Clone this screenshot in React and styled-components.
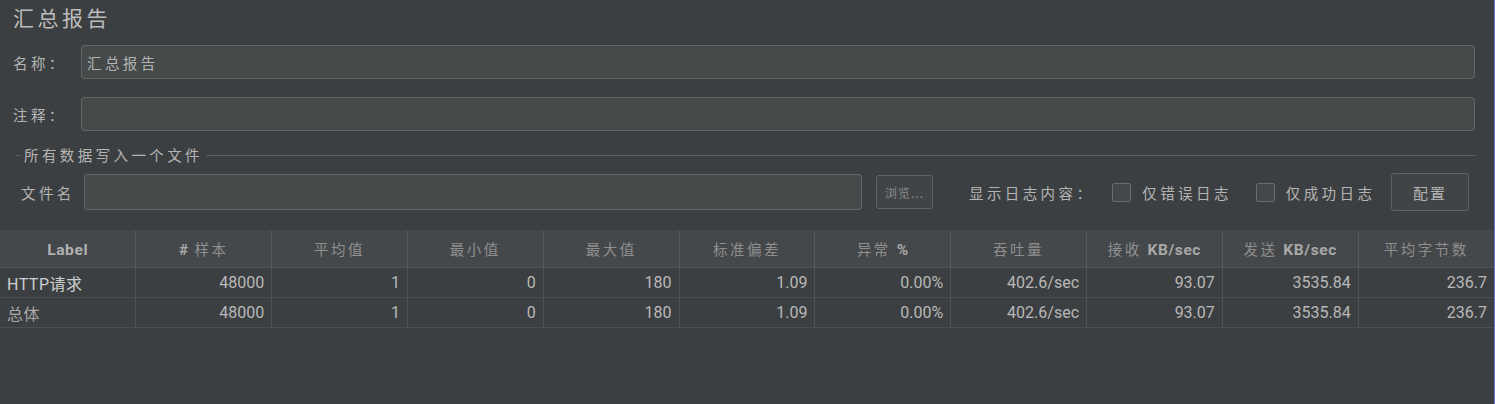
import React from 'react';
import styled, { createGlobalStyle } from 'styled-components';

const GlobalStyle = createGlobalStyle`
  html, body {
    margin: 0;
    padding: 0;
    background: #3c3f41;
  }
  body {
    font-family: Roboto, 'Noto Sans CJK SC', sans-serif;
    color: #bbbbbb;
  }
`;

const cjk = `'Noto Sans CJK SC', 'Noto Sans', sans-serif`;

const Screen = styled.div`
  box-sizing: border-box;
  height: 404px;
  width: 1495px;
  background: #3c3f41;
  border-right: 1px solid #6e6ed8;
  overflow: hidden;
`;

const Title = styled.div`
  height: 40px;
  padding-left: 13px;
  display: flex;
  align-items: center;
  padding-bottom: 6px;
  box-sizing: border-box;
  font-family: ${cjk};
  font-size: 21px;
  letter-spacing: 3.5px;
  color: #bbbbbb;
`;

const Form = styled.div`
  padding: 0 19px 0 13px;
`;

const Row = styled.div`
  display: flex;
  align-items: center;
  height: ${p => p.$h || 34}px;
  margin-top: ${p => p.$top || 0}px;
`;

const Label = styled.span`
  font-family: ${cjk};
  font-size: 14.5px;
  letter-spacing: 3.4px;
  color: #b4b4b4;
  white-space: nowrap;
  width: ${p => (p.$w ? `${p.$w}px` : 'auto')};
  flex: none;
`;

const Field = styled.div`
  box-sizing: border-box;
  height: ${p => p.$h || 34}px;
  flex: ${p => (p.$w ? 'none' : 1)};
  width: ${p => (p.$w ? `${p.$w}px` : 'auto')};
  background: #45494a;
  border: 1px solid #646464;
  border-radius: 3px;
  display: flex;
  align-items: center;
  padding-left: 5px;
  font-family: ${cjk};
  font-size: 14.5px;
  letter-spacing: 3.4px;
  color: #b4b4b4;
`;

const Group = styled.fieldset`
  margin: 15px 0 19px 3px;
  padding: 0 6px 0 5px;
  border: none;
  border-top: 1px solid #5b5e60;
  min-width: 0;
`;

const Legend = styled.legend`
  margin-left: 0;
  padding: 0 3px;
  height: 18px;
  line-height: 18px;
  font-family: ${cjk};
  font-size: 14.5px;
  letter-spacing: 3.4px;
  color: #b4b4b4;
`;

const Button = styled.div`
  box-sizing: border-box;
  flex: none;
  width: ${p => p.$w}px;
  height: ${p => p.$h}px;
  border: 1px solid #5f6163;
  border-radius: 3px;
  background: #404446;
  display: flex;
  align-items: center;
  justify-content: center;
  font-family: ${cjk};
  font-size: ${p => p.$fs}px;
  letter-spacing: ${p => p.$ls}px;
  color: ${p => p.$c};
`;

const Check = styled.span`
  box-sizing: border-box;
  flex: none;
  width: 19px;
  height: 19px;
  border: 1px solid #6a6c6e;
  border-radius: 2px;
  background: #43474a;
`;

const Table = styled.table`
  width: 1494px;
  table-layout: fixed;
  border-collapse: collapse;
`;

const Th = styled.th`
  height: 37px;
  padding: 0;
  background: #45484b;
  border-right: 1px solid #55585a;
  border-bottom: 1px solid #505355;
  font-family: ${cjk};
  font-weight: normal;
  font-size: 14.5px;
  letter-spacing: 2.5px;
  color: #8f8f8f;
  text-align: center;
  &:last-child { border-right: none; }
`;

const B = styled.b`
  font-family: Roboto, sans-serif;
  font-weight: bold;
  font-size: 15.5px;
  letter-spacing: 0.6px;
  color: ${p => p.$c || '#a8a8a8'};
`;

const Td = styled.td`
  height: 29px;
  padding: 0 7px 0 7px;
  border-right: 1px solid #505355;
  border-bottom: 1px solid #4c4f51;
  font-family: Roboto, ${cjk};
  font-size: 16px;
  color: ${p => p.$c || '#b8b8b8'};
  text-align: ${p => (p.$left ? 'left' : 'right')};
  letter-spacing: ${p => (p.$left ? '0.5px' : '0')};
  white-space: nowrap;
  &:last-child { border-right: none; }
`;

const heads = [
  <B $c="#b0b0b0">Label</B>,
  <><B>#</B> 样本</>,
  '平均值',
  '最小值',
  '最大值',
  '标准偏差',
  <>异常 <B>%</B></>,
  '吞吐量',
  <>接收 <B>KB/sec</B></>,
  <>发送 <B>KB/sec</B></>,
  '平均字节数',
];

const rows = [
  { label: 'HTTP请求', c: '#cfcfcf', vals: ['48000', '1', '0', '180', '1.09', '0.00%', '402.6/sec', '93.07', '3535.84', '236.7'] },
  { label: '总体', c: '#a8a8a8', vals: ['48000', '1', '0', '180', '1.09', '0.00%', '402.6/sec', '93.07', '3535.84', '236.7'] },
];

export default function App() {
  return (
    <Screen>
      <GlobalStyle />
      <Title>汇总报告</Title>
      <Form>
        <Row $top={5}>
          <Label $w={68}>名称：</Label>
          <Field>汇总报告</Field>
        </Row>
        <Row $top={18}>
          <Label $w={68}>注释：</Label>
          <Field />
        </Row>
        <Group>
          <Legend>所有数据写入一个文件</Legend>
          <Row $h={38} $top={9}>
            <Label $w={63}>文件名</Label>
            <Field $h={36} $w={778} />
            <Button $w={57} $h={34} $fs={12} $ls={1} $c="#8a8a8a" style={{ marginLeft: 14 }}>浏览...</Button>
            <Label style={{ marginLeft: 36 }}>显示日志内容：</Label>
            <Check style={{ marginLeft: 18 }} />
            <Label style={{ marginLeft: 11 }}>仅错误日志</Label>
            <Check style={{ marginLeft: 24 }} />
            <Label style={{ marginLeft: 11 }}>仅成功日志</Label>
            <Button $w={78} $h={38} $fs={15} $ls={2} $c="#b4b4b4" style={{ marginLeft: 'auto' }}>配置</Button>
          </Row>
        </Group>
      </Form>
      <Table>
        <thead>
          <tr>
            {heads.map((h, i) => <Th key={i}>{h}</Th>)}
          </tr>
        </thead>
        <tbody>
          {rows.map(r => (
            <tr key={r.label}>
              <Td $left $c={r.c}>{r.label}</Td>
              {r.vals.map((v, i) => <Td key={i}>{v}</Td>)}
            </tr>
          ))}
        </tbody>
      </Table>
    </Screen>
  );
}
